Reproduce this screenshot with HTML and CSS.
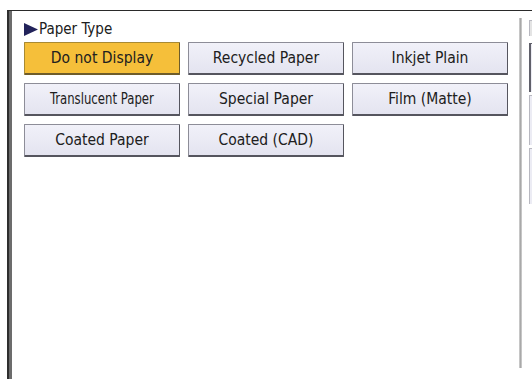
FILE: index.html
```html
<!DOCTYPE html>
<html lang="en">

<head>
    <meta charset="UTF-8">
    <meta name="viewport" content="width=device-width, initial-scale=1.0">
    <link rel="stylesheet" href="styles.css">
    <title>Paper Type</title>
</head>

<body>
    <div class="screen">
        <div class="bar"></div>
        <div class="content">
            <div class="title">
                <svg class="arrow" viewBox="0 0 14 13"><path d="M0 0 L14 6.5 L0 13 Z" /></svg>
                <span>Paper Type</span>
            </div>
            <div class="grid">
                <div class="btn active">Do not Display</div>
                <div class="btn">Recycled Paper</div>
                <div class="btn">Inkjet Plain</div>
                <div class="btn"><span class="squeeze">Translucent Paper</span></div>
                <div class="btn">Special Paper</div>
                <div class="btn">Film (Matte)</div>
                <div class="btn">Coated Paper</div>
                <div class="btn">Coated (CAD)</div>
            </div>
        </div>
        <div class="rail">
            <div class="vline"></div>
            <div class="edges">
                <div class="edge small"></div>
                <div class="edge dark"></div>
                <div class="edge mid"></div>
                <div class="edge low"></div>
            </div>
        </div>
    </div>
</body>

</html>
```

FILE: styles.css
```css
body {
    margin: 0;
    background-color: #ffffff;
    font-family: "DejaVu Sans Condensed", "DejaVu Sans", sans-serif;
    color: #202020;
}

.screen {
    display: flex;
    margin: 10px 0 0 7px;
    height: 368px;
    border-top: 1px solid #2a2a2a;
}

.bar {
    width: 5px;
    background: linear-gradient(to right, #2e2e2e 0 2px, #6c6c6c 2px);
}

.content {
    width: 507px;
    padding: 9px 0 0 12px;
    box-sizing: border-box;
}

.title {
    display: flex;
    align-items: center;
    height: 18px;
    font-size: 15px;
    gap: 1px;
}

.arrow {
    width: 14px;
    height: 13px;
    fill: #22235a;
}

.grid {
    display: grid;
    grid-template-columns: repeat(3, 156px);
    grid-auto-rows: 33px;
    gap: 8px 8px;
    margin-top: 4px;
}

.btn {
    display: flex;
    align-items: center;
    justify-content: center;
    box-sizing: border-box;
    background: linear-gradient(#f1f1f9, #e4e4f0);
    border: 1px solid #8d8d98;
    border-right-color: #55555e;
    border-bottom: 2px solid #55555e;
    border-radius: 1px;
    font-size: 15.5px;
    white-space: nowrap;
}

.btn.active {
    background: #f5bf3a;
    border-color: #a88a34;
    border-bottom-color: #6e5c2a;
    border-right-color: #6e5c2a;
}

.squeeze {
    display: inline-block;
    transform: scaleX(0.84);
}

.rail {
    display: flex;
}

.vline {
    width: 3px;
    margin-top: 7px;
    height: 350px;
    background: linear-gradient(to right, #d4d4d4, #a9a9a9 50%, #d4d4d4);
}

.edges {
    display: flex;
    flex-direction: column;
    width: 3px;
    margin-left: 7px;
    padding-top: 9px;
}

.edge {
    background-color: #ececf4;
    border-left: 1px solid #b8b8c0;
    border-top: 1px solid #b8b8c0;
}

.small {
    height: 15px;
    background-color: #e4e4e4;
}

.dark {
    margin-top: 7px;
    height: 48px;
    border-left: 2px solid #60606a;
    border-top-color: #60606a;
}

.mid {
    margin-top: 3px;
    height: 49px;
}

.low {
    margin-top: 3px;
    height: 55px;
}
```
